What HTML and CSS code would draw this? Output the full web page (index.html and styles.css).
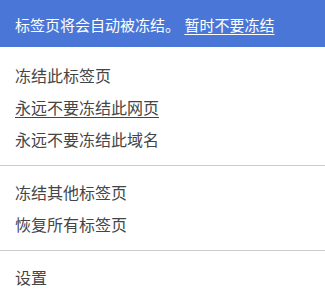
FILE: index.html
```html
<!DOCTYPE html>
<html lang="zh-CN">
<head>
<meta charset="utf-8">
<link rel="stylesheet" href="styles.css">
</head>
<body>
<div class="banner">
  <span class="banner-text">标签页将会自动被冻结。</span>
  <span class="banner-link">暂时不要冻结</span>
</div>
<div class="section first">
  <div class="item">冻结此标签页</div>
  <div class="item hover">永远不要冻结此网页</div>
  <div class="item">永远不要冻结此域名</div>
</div>
<div class="divider"></div>
<div class="section">
  <div class="item">冻结其他标签页</div>
  <div class="item">恢复所有标签页</div>
</div>
<div class="divider"></div>
<div class="section">
  <div class="item">设置</div>
</div>
</body>
</html>
```
FILE: styles.css
```css
html, body {
  margin: 0;
  padding: 0;
  background: #ffffff;
}
body {
  width: 325px;
  font-family: "Noto Sans CJK SC", "Microsoft YaHei", sans-serif;
  overflow: hidden;
}
.banner {
  height: 47px;
  background: #4a77d7;
  color: #ffffff;
  font-size: 15px;
  line-height: 49px;
  padding-left: 15px;
  white-space: nowrap;
}
.banner-link {
  margin-left: 1px;
  text-decoration: underline;
  text-underline-offset: 3px;
}
.section {
  padding: 10px 0;
}
.section.first {
  padding-top: 12px;
}
.item {
  height: 32px;
  line-height: 32px;
  font-size: 16px;
  color: #454545;
  padding-left: 15px;
  white-space: nowrap;
}
.item.hover {
  text-decoration: underline;
  text-underline-offset: 3px;
}
.divider {
  height: 1px;
  background: #cccccc;
}
```
